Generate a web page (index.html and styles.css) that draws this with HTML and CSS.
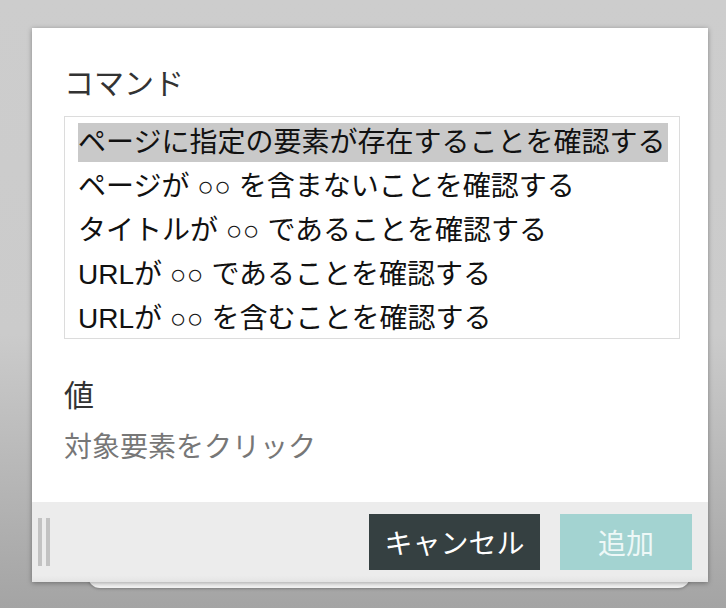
FILE: index.html
```html
<!DOCTYPE html>
<html lang="ja">
<head>
    <meta charset="utf-8">
    <title>コマンドを追加</title>
    <link rel="stylesheet" href="styles.css">
</head>
<body>
    <div class="dialog-wrap">
        <div class="dialog">
            <div class="dialog-body">
                <div class="field-label">コマンド</div>
                <div class="command-list">
                    <div class="command-item selected">ページに指定の要素が存在することを確認する</div>
                    <div class="command-item">ページが ○○ を含まないことを確認する</div>
                    <div class="command-item">タイトルが ○○ であることを確認する</div>
                    <div class="command-item">URLが ○○ であることを確認する</div>
                    <div class="command-item">URLが ○○ を含むことを確認する</div>
                </div>

                <div class="field-label value-label">値</div>
                <div class="value-placeholder">対象要素をクリック</div>
            </div>

            <div class="dialog-footer">
                <div class="drag-handle">
                    <span class="handle-bar"></span>
                    <span class="handle-bar"></span>
                </div>
                <button class="btn btn-cancel">キャンセル</button>
                <button class="btn btn-add">追加</button>
            </div>
        </div>
    </div>
</body>
</html>
```

FILE: styles.css
```css
html,
body {
    height: 100%;
}

body {
    margin: 0;
    overflow: hidden;
    font-family: "Liberation Sans", "Noto Sans CJK JP", sans-serif;
    background: linear-gradient(to bottom, #cdcdcd 0%, #cbcbcb 55%, #a4a4a4 100%);
}

.dialog-wrap {
    position: relative;
    width: 676px;
    margin: 28px 0 0 32px;
}

/* the card peeking out underneath the dialog */
.dialog-wrap::after {
    content: "";
    position: absolute;
    left: 56px;
    right: 18px;
    bottom: -6px;
    height: 30px;
    background: #f4f4f4;
    border-radius: 0 0 12px 12px;
    box-shadow: 0 1px 3px rgba(0, 0, 0, 0.25);
    z-index: 0;
}

.dialog {
    position: relative;
    z-index: 1;
    background: #fff;
    box-shadow: 0 1px 5px rgba(0, 0, 0, 0.35);
}

.dialog-body {
    padding: 38px 28px 37px 32px;
}

.field-label {
    font-size: 30px;
    line-height: 36px;
    color: #333;
}

.command-list {
    margin-top: 14px;
    padding: 1px 11px 0 8px;
    border: 1px solid #dcdcdc;
}

.command-item {
    padding: 5px 0 0 5px;
    font-size: 28px;
    line-height: 39px;
    color: #111;
    white-space: nowrap;
    background-clip: content-box;
}

.command-item.selected {
    background-color: #c9c9c9;
}

.value-label {
    margin-top: 39px;
}

.value-placeholder {
    margin-top: 17px;
    font-size: 28px;
    line-height: 34px;
    color: #777;
}

.dialog-footer {
    display: flex;
    align-items: center;
    gap: 20px;
    height: 80px;
    box-sizing: border-box;
    padding: 12px 16px 12px 6px;
    background: linear-gradient(to bottom, #ececec 0%, #ececec 92%, #e4e4e4 100%);
}

.drag-handle {
    display: flex;
    gap: 4px;
    margin-right: auto;
}

.handle-bar {
    width: 4px;
    height: 48px;
    background: #c2c2c2;
}

.btn {
    height: 56px;
    border: none;
    border-radius: 0;
    font-family: inherit;
    font-size: 28px;
    cursor: pointer;
}

.btn-cancel {
    min-width: 171px;
    padding: 0 14px;
    background: #354041;
    color: #fff;
}

.btn-add {
    width: 132px;
    padding: 0;
    background: #a3d3d1;
    color: #eef8f7;
}
```
